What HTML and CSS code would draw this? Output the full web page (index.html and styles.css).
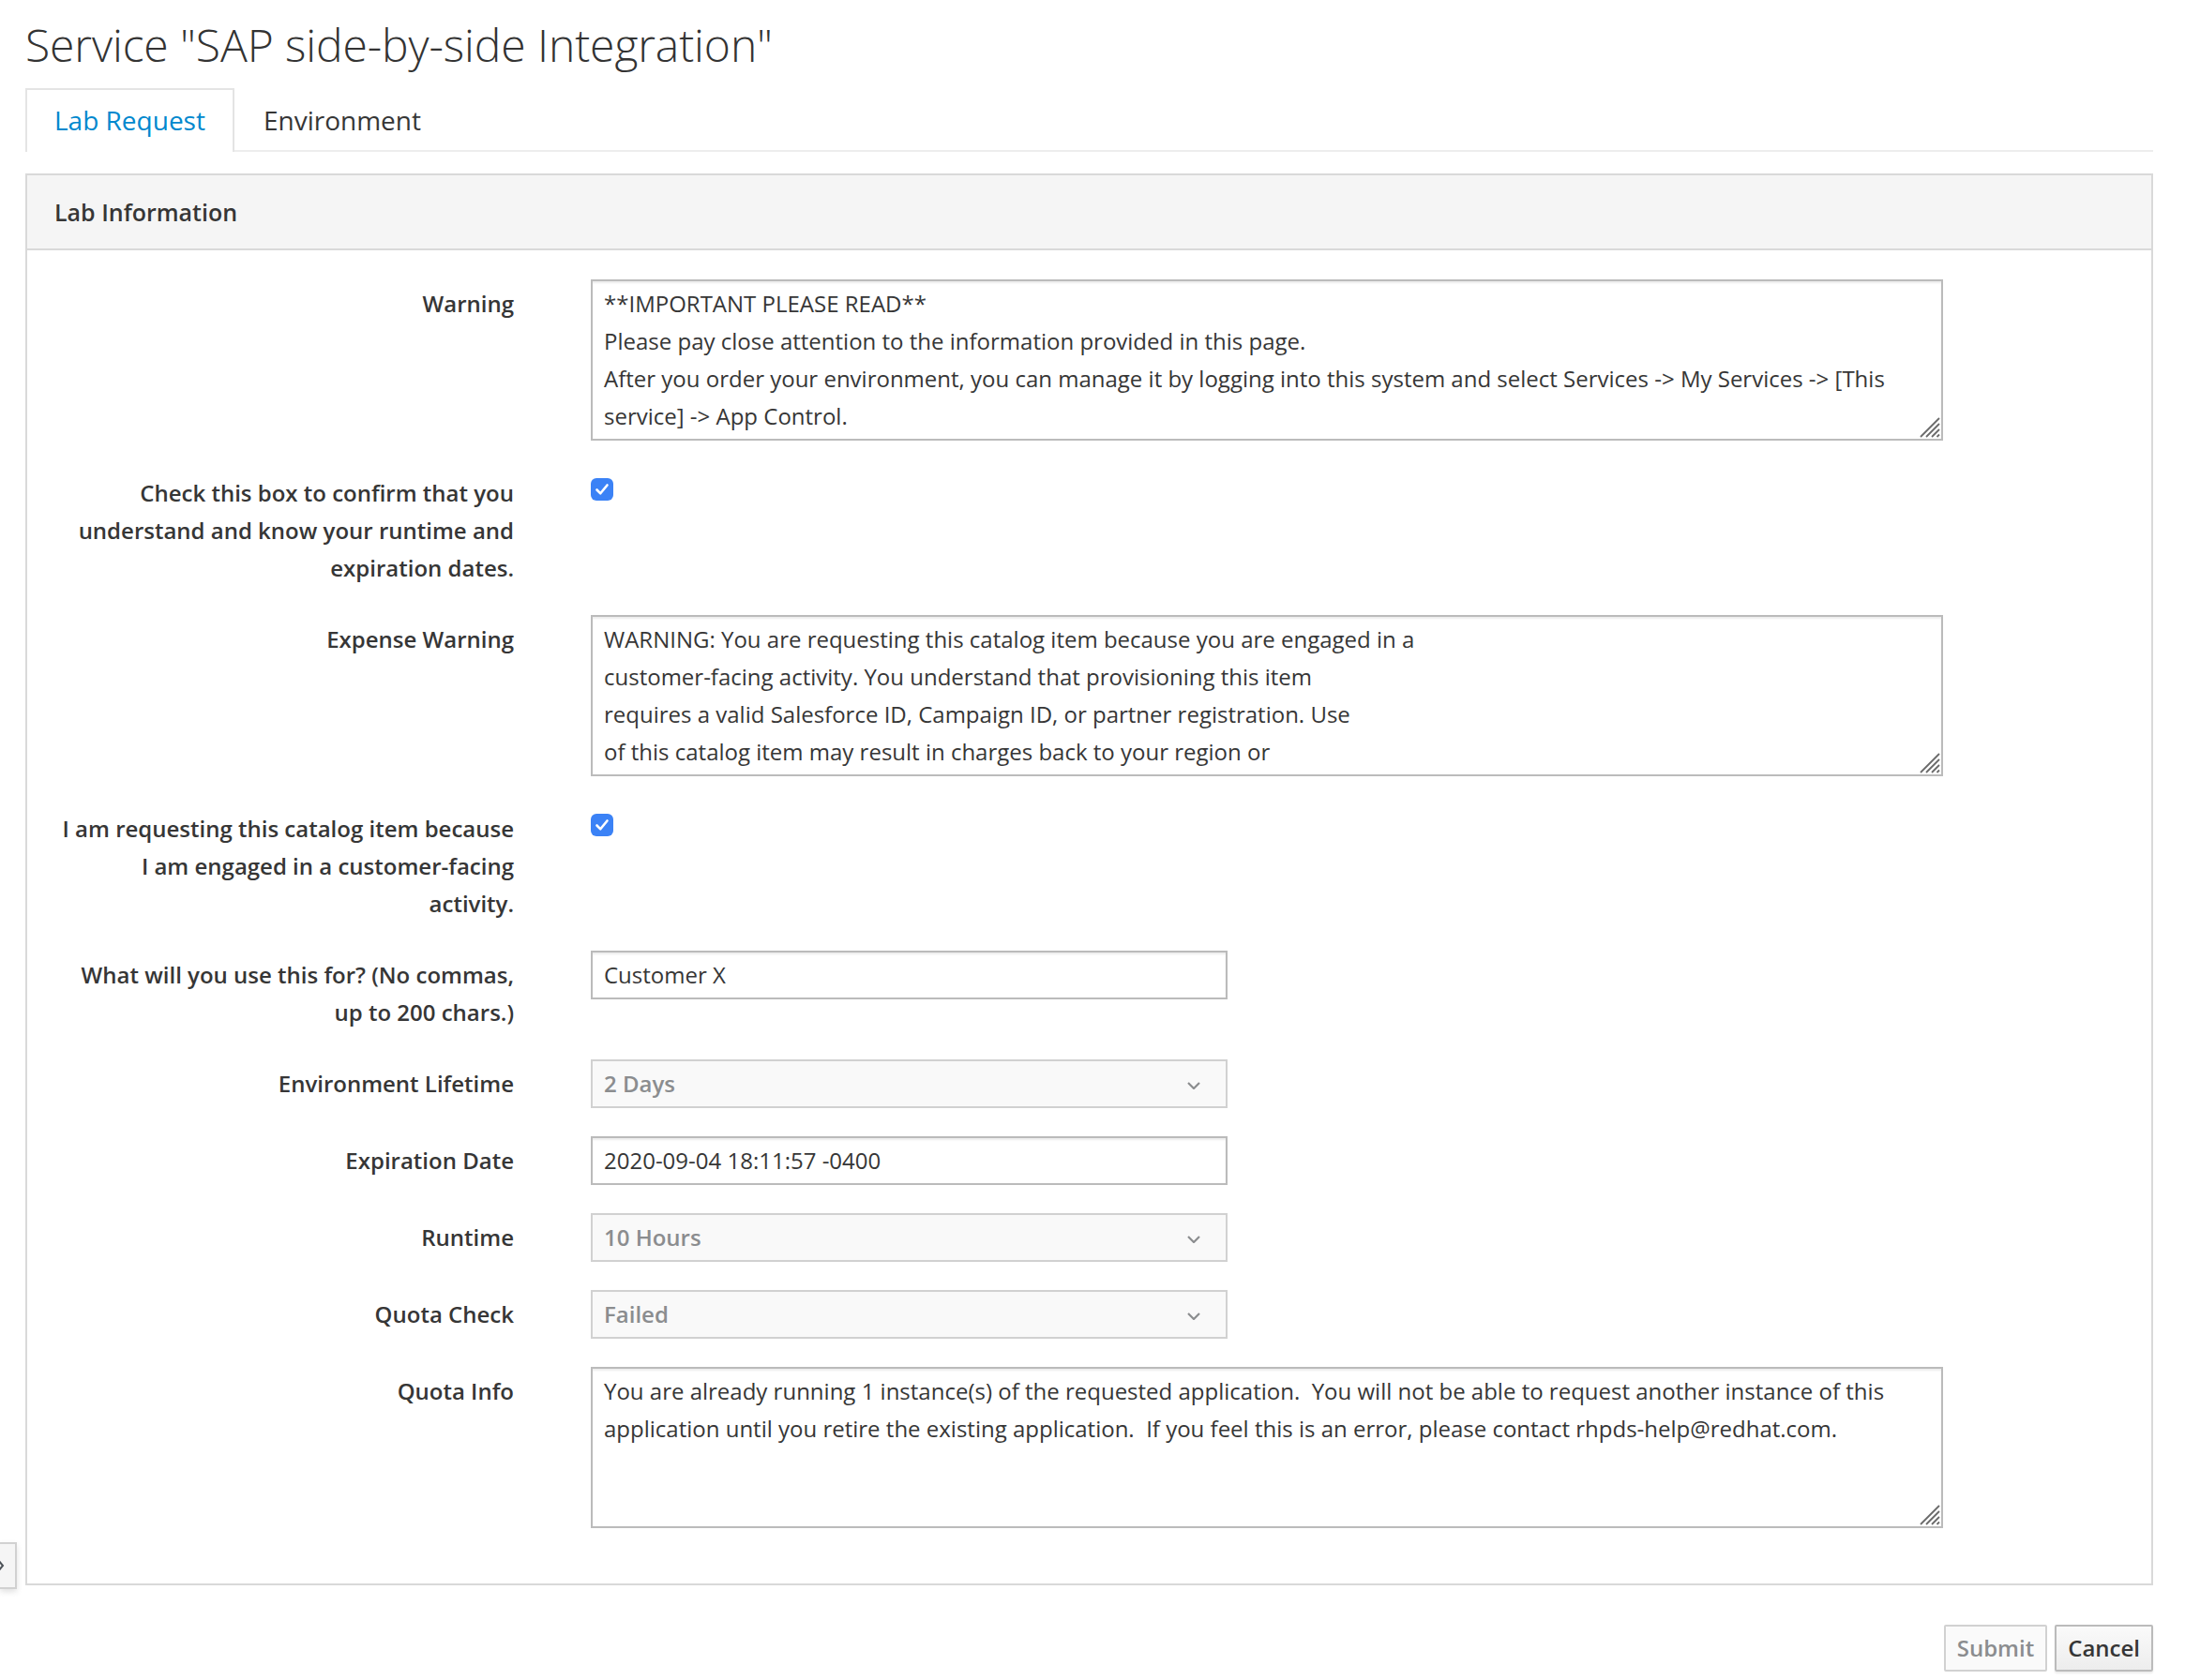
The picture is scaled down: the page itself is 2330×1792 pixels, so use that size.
FILE: index.html
```html
<!DOCTYPE html>
<html lang="en">
<head>
<meta charset="utf-8">
<title>Service "SAP side-by-side Integration"</title>
<link rel="stylesheet" href="styles.css">
</head>
<body>
<div class="page">
  <h1 class="title">Service "SAP side-by-side Integration"</h1>
  <ul class="tabs">
    <li class="tab active">Lab Request</li>
    <li class="tab">Environment</li>
  </ul>
  <section class="panel">
    <div class="panel-heading">Lab Information</div>
    <div class="panel-body">
      <div class="form-group">
        <label class="control-label">Warning</label>
        <div class="control">
          <div class="textarea">**IMPORTANT PLEASE READ**<br>Please pay close attention to the information provided in this page.<br>After you order your environment, you can manage it by logging into this system and select Services -&gt; My Services -&gt; [This<br>service] -&gt; App Control.<span class="grip"><svg viewBox="0 0 24 24" width="24" height="24"><path d="M23 3 L3 23 M23 9 L9 23 M23 15 L15 23 M23 20.5 L20.5 23" stroke="#6b6b6b" stroke-width="1.8" fill="none"/></svg></span></div>
        </div>
      </div>
      <div class="form-group">
        <label class="control-label">Check this box to confirm that you understand and know your runtime and expiration dates.</label>
        <div class="control">
          <span class="checkbox"><svg viewBox="0 0 24 24" width="24" height="24"><path d="M6.5 12.5 L10.3 16.3 L17.5 7.5" stroke="#fff" stroke-width="2.6" fill="none" stroke-linecap="round" stroke-linejoin="round"/></svg></span>
        </div>
      </div>
      <div class="form-group">
        <label class="control-label">Expense Warning</label>
        <div class="control">
          <div class="textarea">WARNING: You are requesting this catalog item because you are engaged in a<br>customer-facing activity. You understand that provisioning this item<br>requires a valid Salesforce ID, Campaign ID, or partner registration. Use<br>of this catalog item may result in charges back to your region or<span class="grip"><svg viewBox="0 0 24 24" width="24" height="24"><path d="M23 3 L3 23 M23 9 L9 23 M23 15 L15 23 M23 20.5 L20.5 23" stroke="#6b6b6b" stroke-width="1.8" fill="none"/></svg></span></div>
        </div>
      </div>
      <div class="form-group">
        <label class="control-label">I am requesting this catalog item because I am engaged in a customer-facing activity.</label>
        <div class="control">
          <span class="checkbox"><svg viewBox="0 0 24 24" width="24" height="24"><path d="M6.5 12.5 L10.3 16.3 L17.5 7.5" stroke="#fff" stroke-width="2.6" fill="none" stroke-linecap="round" stroke-linejoin="round"/></svg></span>
        </div>
      </div>
      <div class="form-group">
        <label class="control-label">What will you use this for? (No commas, up to 200 chars.)</label>
        <div class="control">
          <div class="input">Customer X</div>
        </div>
      </div>
      <div class="form-group">
        <label class="control-label">Environment Lifetime</label>
        <div class="control">
          <div class="select"><span>2 Days</span><svg class="caret" viewBox="0 0 14 8" width="14" height="8"><path d="M1 1 L7 7 L13 1" stroke="#8b8d8f" stroke-width="2.2" fill="none"/></svg></div>
        </div>
      </div>
      <div class="form-group">
        <label class="control-label">Expiration Date</label>
        <div class="control">
          <div class="input">2020-09-04 18:11:57 -0400</div>
        </div>
      </div>
      <div class="form-group">
        <label class="control-label">Runtime</label>
        <div class="control">
          <div class="select"><span>10 Hours</span><svg class="caret" viewBox="0 0 14 8" width="14" height="8"><path d="M1 1 L7 7 L13 1" stroke="#8b8d8f" stroke-width="2.2" fill="none"/></svg></div>
        </div>
      </div>
      <div class="form-group">
        <label class="control-label">Quota Check</label>
        <div class="control">
          <div class="select"><span>Failed</span><svg class="caret" viewBox="0 0 14 8" width="14" height="8"><path d="M1 1 L7 7 L13 1" stroke="#8b8d8f" stroke-width="2.2" fill="none"/></svg></div>
        </div>
      </div>
      <div class="form-group">
        <label class="control-label">Quota Info</label>
        <div class="control">
          <div class="textarea">You are already running 1 instance(s) of the requested application.&nbsp; You will not be able to request another instance of this<br>application until you retire the existing application.&nbsp; If you feel this is an error, please contact rhpds-help@redhat.com.<span class="grip"><svg viewBox="0 0 24 24" width="24" height="24"><path d="M23 3 L3 23 M23 9 L9 23 M23 15 L15 23 M23 20.5 L20.5 23" stroke="#6b6b6b" stroke-width="1.8" fill="none"/></svg></span></div>
        </div>
      </div>
    </div>
  </section>
  <div class="actions">
    <button class="btn btn-disabled" type="button">Submit</button>
    <button class="btn" type="button">Cancel</button>
  </div>
</div>
<div class="drawer-toggle"><svg viewBox="0 0 8 14" width="8" height="14"><path d="M1 1 L6 7 L1 13" stroke="#4d5258" stroke-width="2" fill="none"/></svg></div>
</body>
</html>
```
FILE: styles.css
```css
html, body {
  margin: 0;
  padding: 0;
  background: #fff;
}

body {
  font-family: "Open Sans", "Noto Sans", "Liberation Sans", sans-serif;
  font-size: 24px;
  line-height: 40px;
  color: #363636;
  position: relative;
  min-height: 1792px;
}

.page {
  padding: 21px 34px 0 27px;
}

.title {
  margin: 0 0 20px 0;
  font-size: 48px;
  line-height: 53px;
  font-weight: 300;
  color: #333333;
  letter-spacing: -0.1px;
}

.tabs {
  list-style: none;
  margin: 0;
  padding: 0;
  display: flex;
  border-bottom: 2px solid #ededed;
}

.tab {
  font-size: 28px;
  line-height: 40px;
  padding: 12px 29px 12px 29px;
  border: 2px solid transparent;
  border-bottom: none;
  margin-bottom: -2px;
  color: #363636;
}

.tab.active {
  color: #0088ce;
  border-color: #e4e4e4;
  background: #fff;
  padding-bottom: 14px;
}

.panel {
  margin-top: 23px;
  border: 2px solid #d9d9d9;
  background: #fff;
}

.panel-heading {
  background: #f5f5f5;
  border-bottom: 2px solid #d9d9d9;
  padding: 19px 29px;
  font-size: 25px;
  line-height: 40px;
  font-weight: 600;
  color: #363636;
}

.panel-body {
  padding: 31px 30px 29px 30px;
}

.form-group {
  display: grid;
  grid-template-columns: 489px 1442px;
  column-gap: 82px;
  margin-bottom: 30px;
  align-items: start;
}

.control-label {
  text-align: right;
  font-weight: 600;
  padding-top: 6px;
  line-height: 40px;
  color: #363636;
}

.control {
  min-width: 0;
}

.textarea {
  position: relative;
  box-sizing: border-box;
  height: 172px;
  border: 2px solid #bbbbbb;
  box-shadow: inset 0 2px 2px rgba(3, 3, 3, 0.075);
  padding: 4px 12px;
  line-height: 40px;
  overflow: hidden;
  background: #fff;
  color: #363636;
  white-space: nowrap;
}

.grip {
  position: absolute;
  right: 1px;
  bottom: 1px;
  width: 24px;
  height: 24px;
  line-height: 0;
}

.checkbox {
  display: flex;
  align-items: center;
  justify-content: center;
  width: 24px;
  height: 24px;
  margin-top: 10px;
  border-radius: 6px;
  background: #3b82f6;
  box-sizing: border-box;
}

.input,
.select {
  box-sizing: border-box;
  width: 679px;
  height: 52px;
  border: 2px solid #bbbbbb;
  padding: 4px 12px;
  line-height: 40px;
  background: #fff;
  box-shadow: inset 0 2px 2px rgba(3, 3, 3, 0.075);
  color: #363636;
}

.select {
  display: flex;
  align-items: center;
  justify-content: space-between;
  background: #f9f9f9;
  border-color: #d1d1d1;
  box-shadow: none;
  color: #8b8d8f;
  font-weight: 600;
  padding-right: 27px;
}

.caret {
  display: block;
  margin-top: 4px;
}

.actions {
  display: flex;
  justify-content: flex-end;
  gap: 8px;
  margin-top: 42px;
}

.btn {
  font-family: inherit;
  font-size: 24px;
  line-height: 40px;
  font-weight: 600;
  padding: 3px 12px 3px 12px;
  border: 2px solid #bbbbbb;
  border-radius: 2px;
  background: linear-gradient(to bottom, #fafafa 0%, #ededed 100%);
  color: #363636;
  box-shadow: 0 2px 2px rgba(3, 3, 3, 0.08);
  margin: 0;
}

.btn-disabled {
  background: #fafafa;
  border-color: #d1d1d1;
  color: #8b8d8f;
  box-shadow: none;
}

.drawer-toggle {
  position: absolute;
  left: 0;
  top: 1645px;
  width: 18px;
  height: 50px;
  box-sizing: border-box;
  border: 2px solid #d1d1d1;
  border-left: none;
  background: #f5f5f5;
  box-shadow: 0 3px 6px rgba(0, 0, 0, 0.12);
  display: flex;
  align-items: center;
}

.drawer-toggle svg {
  display: block;
  margin-left: -3px;
}
```
